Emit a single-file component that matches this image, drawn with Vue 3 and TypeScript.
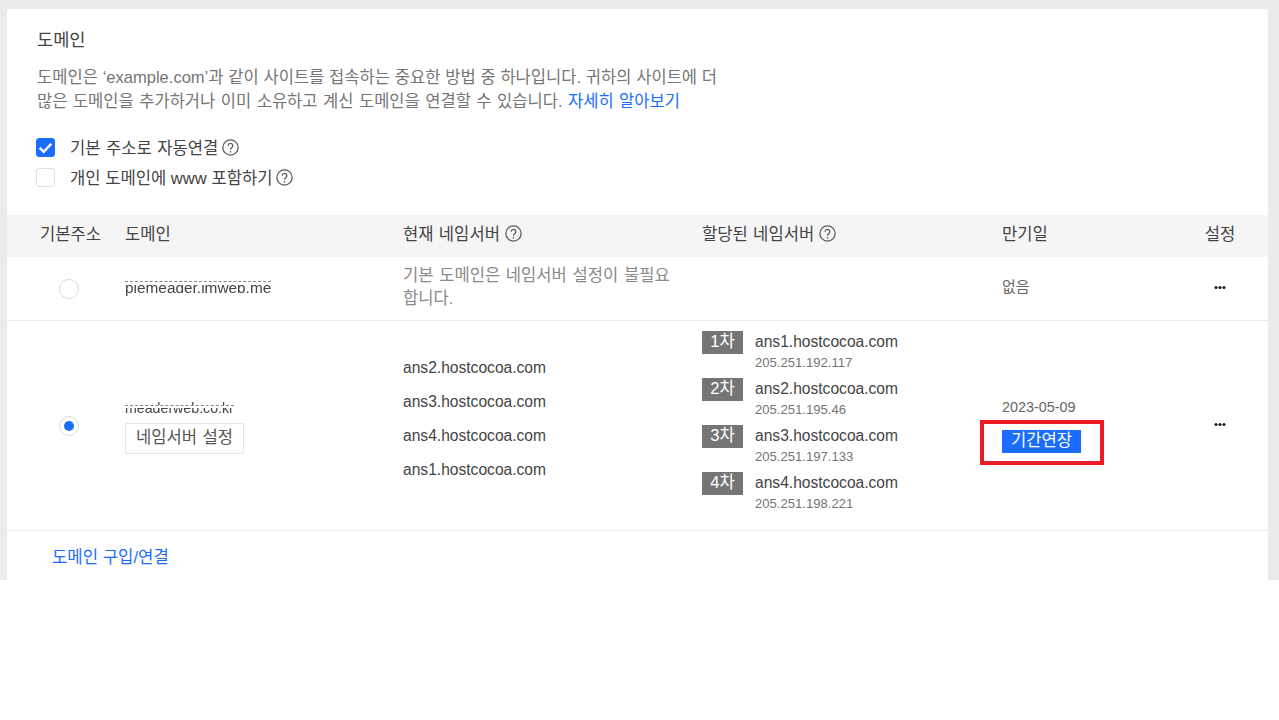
<script setup lang="ts">
const servers = ['ans2.hostcocoa.com', 'ans3.hostcocoa.com', 'ans4.hostcocoa.com', 'ans1.hostcocoa.com']
const assigned = [
  { rank: '1차', host: 'ans1.hostcocoa.com', ip: '205.251.192.117' },
  { rank: '2차', host: 'ans2.hostcocoa.com', ip: '205.251.195.46' },
  { rank: '3차', host: 'ans3.hostcocoa.com', ip: '205.251.197.133' },
  { rank: '4차', host: 'ans4.hostcocoa.com', ip: '205.251.198.221' },
]
</script>

<template>
  <div class="page">
    <section class="card">
      <div class="intro">
        <h2 class="title">도메인</h2>
        <p class="desc">
          <span class="line-a">도메인은 ‘example.com’과 같이 사이트를 접속하는 중요한 방법 중 하나입니다. 귀하의 사이트에 더</span><br />
          <span class="line-b">많은 도메인을 추가하거나 이미 소유하고 계신 도메인을 연결할 수 있습니다. <a class="link">자세히 알아보기</a></span>
        </p>
        <div class="checks">
          <label class="check">
            <span class="box on">
              <svg width="15" height="12" viewBox="0 0 13 11"><path d="M1.2 5.4 4.9 9l6.9-7.4" fill="none" stroke="#fff" stroke-width="2.2" /></svg>
            </span>
            <span class="label wide">기본 주소로 자동연결</span>
            <svg class="help" viewBox="0 0 16 16"><use href="#help-icon" /></svg>
          </label>
          <label class="check">
            <span class="box"></span>
            <span class="label">개인 도메인에 www 포함하기</span>
            <svg class="help" viewBox="0 0 16 16"><use href="#help-icon" /></svg>
          </label>
        </div>
      </div>

      <div class="row head">
        <div class="c-head">기본주소</div>
        <div>도메인</div>
        <div class="inline"><span>현재 네임서버</span><svg class="help" viewBox="0 0 16 16"><use href="#help-icon" /></svg></div>
        <div class="inline"><span>할당된 네임서버</span><svg class="help" viewBox="0 0 16 16"><use href="#help-icon" /></svg></div>
        <div>만기일</div>
        <div class="c-last">설정</div>
      </div>

      <div class="row first">
        <div class="c-radio"><span class="radio"></span></div>
        <div class="domain"><span class="masked">piemeader.imweb.me</span></div>
        <div class="note">기본 도메인은 네임서버 설정이 불필요합니다.</div>
        <div></div>
        <div class="none">없음</div>
        <div class="c-last dots-cell"><svg class="dots" viewBox="0 0 14 5"><circle cx="3" cy="2.5" r="1.6" /><circle cx="7" cy="2.5" r="1.6" /><circle cx="11" cy="2.5" r="1.6" /></svg></div>
      </div>

      <div class="row second">
        <div class="c-radio"><span class="radio on"></span></div>
        <div class="domain-stack">
          <span class="masked small">meaderweb.co.kr</span>
          <button class="outline">네임서버 설정</button>
        </div>
        <div class="servers">
          <div v-for="s in servers" :key="s">{{ s }}</div>
        </div>
        <div class="assigned">
          <div v-for="a in assigned" :key="a.rank" class="ns">
            <span class="rank">{{ a.rank }}</span>
            <div>
              <div class="host">{{ a.host }}</div>
              <div class="ip">{{ a.ip }}</div>
            </div>
          </div>
        </div>
        <div class="expire">
          <div class="date">2023-05-09</div>
          <div class="renew-wrap">
            <button class="renew">기간연장</button>
            <span class="highlight"></span>
          </div>
        </div>
        <div class="c-last dots-cell"><svg class="dots" viewBox="0 0 14 5"><circle cx="3" cy="2.5" r="1.6" /><circle cx="7" cy="2.5" r="1.6" /><circle cx="11" cy="2.5" r="1.6" /></svg></div>
      </div>

      <div class="foot"><a class="link">도메인 구입/연결</a></div>
    </section>

    <svg width="0" height="0" class="defs">
      <symbol id="help-icon" viewBox="0 0 16 16">
        <circle cx="8" cy="8" r="7.2" fill="none" stroke="#5c5c5c" stroke-width="1.2" />
        <path d="M5.8 6.3a2.2 2.2 0 1 1 3.5 1.8c-.8.5-1.3 1-1.3 1.9" fill="none" stroke="#5c5c5c" stroke-width="1.2" />
        <circle cx="8" cy="12" r=".8" fill="#5c5c5c" />
      </symbol>
    </svg>
  </div>
</template>

<style>
html, body { margin: 0; background: #fff; }
</style>

<style scoped>
.page {
  box-sizing: border-box;
  height: 580px;
  padding: 9px 11px 0 7px;
  background: #ebebeb;
  font-family: "Liberation Sans", "Noto Sans CJK KR", sans-serif;
  font-size: 15.6px;
  color: #3a3a3a;
  overflow: hidden;
}
.defs { position: absolute; }
.card {
  height: 571px;
  background: #fff;
  border-radius: 2px 2px 0 0;
  display: flex;
  flex-direction: column;
}
.intro { height: 206px; box-sizing: border-box; padding: 19px 0 0 30px; }
.title { margin: 0; font-size: 17.6px; font-weight: 400; line-height: 24px; color: #444; }
.desc { margin: 14px 0 0; font-size: 16.55px; line-height: 24px; color: #757575; white-space: nowrap; }
.line-a { word-spacing: 0.2px; }
.line-b { word-spacing: 0.9px; }
.link { color: #1a6dff; }
.checks { margin: 24px 0 0 -1px; display: flex; flex-direction: column; gap: 11px; }
.check { display: flex; align-items: center; gap: 4px; height: 19px; font-size: 16.6px; color: #444; }
.label { padding-bottom: 2px; }
.wide { word-spacing: 0.8px; }
.box {
  box-sizing: border-box;
  width: 19px;
  height: 19px;
  margin-right: 11px;
  border: 1px solid #dde1e4;
  border-radius: 3px;
  display: flex;
  align-items: center;
  justify-content: center;
}
.box.on { background: #1a6dff; border-color: #1a6dff; }
.help { width: 17px; height: 17px; flex: none; }
.row {
  display: grid;
  grid-template-columns: 118px 278px 299px 300px 170px 96px;
  align-items: center;
}
.c-head { display: flex; justify-content: center; padding-left: 9px; }
.c-radio { display: flex; justify-content: center; padding-left: 5px; }
.c-last { display: flex; justify-content: center; }
.dots-cell { padding-bottom: 2px; }
.head { height: 42px; background: #f5f5f5; color: #444; font-size: 16.6px; padding-bottom: 6px; box-sizing: border-box; }
.inline { display: flex; align-items: center; gap: 5px; word-spacing: 0.7px; }
.first { height: 64px; border-bottom: 1px solid #ececec; box-sizing: border-box; }
.second { height: 210px; border-bottom: 1px solid #ececec; box-sizing: border-box; }
.radio {
  box-sizing: border-box;
  width: 20px;
  height: 20px;
  border: 1px solid #dadada;
  border-radius: 50%;
  display: flex;
  align-items: center;
  justify-content: center;
  background: #fff;
}
.radio.on::after { content: ""; width: 10px; height: 10px; border-radius: 50%; background: #1a6dff; }
.masked {
  position: relative;
  display: inline-block;
  color: #444;
  font-size: 15.4px;
  line-height: 16px;
  filter: blur(0.5px);
}
.masked::after {
  content: "";
  position: absolute;
  left: 0;
  right: 0;
  top: 1px;
  height: 3px;
  background: #fff;
  border-top: 1px dashed #888;
}
.masked.small { font-size: 14.2px; }
.masked.small::after { top: 5px; height: 2px; }
.domain { margin-top: -1px; }
.domain-stack { display: flex; flex-direction: column; align-items: flex-start; gap: 7px; padding-top: 3px; }
.outline {
  box-sizing: border-box;
  width: 119px;
  height: 31px;
  border: 1px solid #e5e5e5;
  border-radius: 2px;
  background: #fff;
  color: #555;
  font: inherit;
  font-size: 16.6px;
  line-height: 27px;
  padding: 0 0 2px;
  word-spacing: 1px;
}
.note { color: #8a8a8a; font-size: 16.6px; line-height: 23px; width: 270px; padding-bottom: 4px; word-spacing: 1px; }
.none { color: #666; font-size: 15px; padding-bottom: 6px; }
.servers { display: flex; flex-direction: column; gap: 14px; color: #444; line-height: 20px; padding-bottom: 13px; }
.assigned { display: flex; flex-direction: column; gap: 5px; padding-bottom: 6px; }
.ns { display: flex; align-items: flex-start; gap: 12px; }
.rank {
  width: 41px;
  height: 23px;
  background: #757575;
  color: #fff;
  text-align: center;
  font-size: 16.6px;
  line-height: 21px;
}
.host { line-height: 21px; color: #444; }
.ip { font-size: 13.1px; line-height: 21px; color: #757575; }
.expire { padding-top: 0; padding-bottom: 2px; }
.date { font-size: 14.4px; line-height: 20px; color: #666; }
.renew-wrap { position: relative; margin-top: 13px; width: 79px; height: 23px; }
.renew {
  display: block;
  width: 79px;
  height: 23px;
  border: 0;
  padding: 0 0 2px;
  background: #1a6dff;
  color: #fff;
  font: inherit;
  font-size: 16.6px;
  line-height: 21px;
}
.highlight {
  position: absolute;
  left: -22px;
  top: -10px;
  width: 124px;
  height: 45px;
  box-sizing: border-box;
  border: 4px solid #ed1c24;
}
.dots { width: 14px; height: 5px; fill: #222; }
.foot { flex: 1; padding: 15px 0 0 45px; font-size: 16.7px; line-height: 24px; }
</style>
